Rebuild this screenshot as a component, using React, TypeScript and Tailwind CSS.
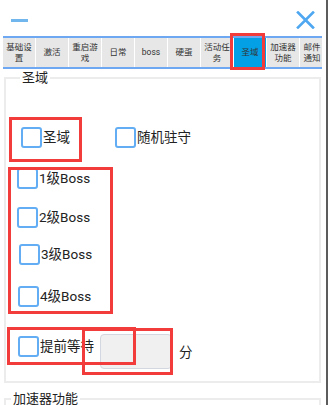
import React from 'react';

const tabs = [
  ['基础设', '置'],
  ['激活'],
  ['重启游', '戏'],
  ['日常'],
  ['boss'],
  ['硬蛋'],
  ['活动任', '务'],
  ['圣域'],
  ['加速器', '功能'],
  ['邮件', '通知'],
];

const Box: React.FC<{ className?: string }> = ({ className = '' }) => (
  <span className={`block w-[21px] h-[21px] shrink-0 rounded-[3px] border-2 border-[#62adf3] bg-white ${className}`} />
);

const Check: React.FC<{ label: string; className?: string; boxClass?: string }> = ({ label, className = '', boxClass = '' }) => (
  <div className={`flex items-center ${className}`}>
    <Box className={boxClass} />
    <span className="ml-[1px] text-[13.5px] leading-none text-[#222]">{label}</span>
  </div>
);

const Mark: React.FC<{ className: string }> = ({ className }) => (
  <div className={`absolute border-[3px] border-[#f23b3b] pointer-events-none ${className}`} />
);

export default function App() {
  return (
    <div
      className="relative w-[328px] h-[405px] overflow-hidden bg-white"
      style={{ fontFamily: 'Roboto, "Noto Sans CJK SC", sans-serif' }}
    >
      {/* 顶栏 */}
      <div className="flex h-[36px] items-start justify-between">
        <span className="ml-[11px] mt-[19px] block h-[3px] w-[17px] bg-[#72b6ee]" />
        <svg className="mr-[13px] mt-[11px]" width="19" height="18" viewBox="0 0 19 18">
          <path d="M2 1.5 L17 16.5 M17 1.5 L2 16.5" stroke="#4ea7f0" strokeWidth="2.6" strokeLinecap="square" />
        </svg>
      </div>

      {/* 选项卡 */}
      <div className="ml-[3px] flex h-[33px] w-[319px] overflow-hidden border-y-2 border-[#6fa8f2] bg-[#e7e7e7]">
        {tabs.map((t, i) => (
          <div
            key={i}
            className={`flex shrink-0 flex-col items-center justify-center border-r border-white text-[8.5px] leading-[11px] text-[#333] ${
              i === 9 ? 'w-[25px]' : 'w-[33px]'
            } ${i === 7 ? 'bg-[#03a0e6]' : ''}`}
          >
            {t.map((l) => (
              <span key={l}>{l}</span>
            ))}
          </div>
        ))}
      </div>

      {/* 圣域 */}
      <fieldset className="mx-[4px] mt-[1px] w-[317px] border-2 border-[#ececec] pl-[11px] pb-[12px] pt-[41px]">
        <legend className="ml-[3px] px-[2px] text-[13px] leading-[16px] text-[#222]">圣域</legend>
        <div className="flex items-center">
          <Check label="圣域" className="ml-[4px] w-[94px]" />
          <Check label="随机驻守" />
        </div>
        <Check label="1级Boss" className="mt-[20px]" />
        <Check label="2级Boss" className="mt-[18px]" />
        <Check label="3级Boss" className="mt-[16px]" boxClass="ml-[2px]" />
        <Check label="4级Boss" className="mt-[21px]" boxClass="ml-[1px]" />
        <div className="mt-[27px] flex items-start">
          <Check label="提前等待" className="mt-[2px]" boxClass="ml-[1px]" />
          <div className="ml-[6px] h-[35px] w-[72px] rounded-[4px] border border-[#d3d7df] bg-[#f0f0f0]" />
          <span className="ml-[7px] mt-[12px] text-[13.5px] leading-none text-[#222]">分</span>
        </div>
      </fieldset>

      {/* 加速器功能 */}
      <fieldset className="mx-[4px] mt-[8px] h-[40px] w-[317px] border-2 border-[#ececec]">
        <legend className="ml-[5px] px-[2px] text-[13px] leading-[16px] text-[#222]">加速器功能</legend>
      </fieldset>

      {/* 右侧滚动条边 */}
      <div className="absolute right-0 top-0 h-full w-[2px] bg-[#5c5c5c]" />

      {/* 标注框 */}
      <Mark className="left-[230px] top-[33px] h-[37px] w-[35px]" />
      <Mark className="left-[9px] top-[117px] h-[45px] w-[73px]" />
      <Mark className="left-[8px] top-[167px] h-[147px] w-[105px]" />
      <Mark className="left-[7px] top-[327px] h-[38px] w-[129px]" />
      <Mark className="left-[82px] top-[328px] h-[47px] w-[91px]" />
    </div>
  );
}
